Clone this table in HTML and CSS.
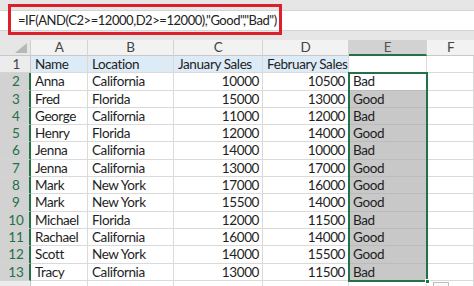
FILE: index.html
```html
<!DOCTYPE html>
<html>
<head>
<meta charset="utf-8">
<link rel="stylesheet" href="styles.css">
</head>
<body>
<div class="app">
  <div class="top-strip"></div>
  <div class="formula-row">
    <div class="fx-left"></div>
    <div class="formula">=IF(AND(C2&gt;=12000,D2&gt;=12000),"Good","Bad")</div>
  </div>
  <div class="gap-strip"></div>
  <div class="sheet">
    <div class="corner"><svg width="12" height="10" viewBox="0 0 12 10"><polygon points="12,0 12,10 0,10" fill="#b7b7b7"/></svg></div>
    <div class="ch">A</div><div class="ch">B</div><div class="ch">C</div><div class="ch">D</div><div class="ch ch-sel">E</div><div class="ch ch-last">F</div>

    <div class="rh">1</div><div class="c hd">Name</div><div class="c hd">Location</div><div class="c hd">January Sales</div><div class="c hd">February Sales</div><div class="c"></div><div class="c"></div>
    <div class="rh sel">2</div><div class="c">Anna</div><div class="c">California</div><div class="c n">10000</div><div class="c n">10500</div><div class="c e act">Bad</div><div class="c"></div>
    <div class="rh sel">3</div><div class="c">Fred</div><div class="c">Florida</div><div class="c n">15000</div><div class="c n">13000</div><div class="c e">Good</div><div class="c"></div>
    <div class="rh sel">4</div><div class="c">George</div><div class="c">California</div><div class="c n">11000</div><div class="c n">12000</div><div class="c e">Bad</div><div class="c"></div>
    <div class="rh sel">5</div><div class="c">Henry</div><div class="c">Florida</div><div class="c n">12000</div><div class="c n">14000</div><div class="c e">Good</div><div class="c"></div>
    <div class="rh sel">6</div><div class="c">Jenna</div><div class="c">California</div><div class="c n">14000</div><div class="c n">10000</div><div class="c e">Bad</div><div class="c"></div>
    <div class="rh sel">7</div><div class="c">Jenna</div><div class="c">California</div><div class="c n">13000</div><div class="c n">17000</div><div class="c e">Good</div><div class="c"></div>
    <div class="rh sel">8</div><div class="c">Mark</div><div class="c">New York</div><div class="c n">17000</div><div class="c n">16000</div><div class="c e">Good</div><div class="c"></div>
    <div class="rh sel">9</div><div class="c">Mark</div><div class="c">New York</div><div class="c n">15500</div><div class="c n">14000</div><div class="c e">Good</div><div class="c"></div>
    <div class="rh sel">10</div><div class="c">Michael</div><div class="c">Florida</div><div class="c n">12000</div><div class="c n">11500</div><div class="c e">Bad</div><div class="c"></div>
    <div class="rh sel">11</div><div class="c">Rachael</div><div class="c">California</div><div class="c n">16000</div><div class="c n">14000</div><div class="c e">Good</div><div class="c"></div>
    <div class="rh sel">12</div><div class="c">Scott</div><div class="c">New York</div><div class="c n">14000</div><div class="c n">15500</div><div class="c e">Good</div><div class="c"></div>
    <div class="rh sel">13</div><div class="c">Tracy</div><div class="c">California</div><div class="c n">13000</div><div class="c n">11500</div><div class="c e">Bad</div><div class="c"></div>
    <div class="rh last"></div><div class="c last"></div><div class="c last"></div><div class="c last"></div><div class="c last"></div><div class="c last"></div><div class="c last"><span class="qa"></span></div>

    <div class="selbox"><span class="handle"></span></div>
  </div>
  <div class="redbox"></div>
</div>
</body>
</html>
```

FILE: styles.css
```css
* { box-sizing: border-box; margin: 0; padding: 0; }
html, body { width: 474px; height: 286px; overflow: hidden; background: #fff; }
body { font-family: "Lato", "Open Sans", "Liberation Sans", sans-serif; color: #1f1f1f; }
.app { position: relative; width: 474px; height: 286px; overflow: hidden; }
.top-strip { height: 10px; background: #e6e6e6; }
.formula-row { height: 21px; display: flex; background: #fff; border-top: 1px solid #d4d4d4; border-bottom: 1px solid #d4d4d4; }
.fx-left { width: 9px; border-right: 1px solid #d4d4d4; }
.formula { padding-left: 9px; font-size: 13px; letter-spacing: -0.45px; word-spacing: 0; line-height: 19px; color: #222; white-space: nowrap; }
.gap-strip { height: 9px; background: #e6e6e6; }
.sheet {
  position: relative;
  display: grid;
  grid-template-columns: 31px 57px 86px 89px 86px 78px 47px;
  grid-template-rows: 16px repeat(13, 17.3px) 5px;
  font-size: 13.5px;
  letter-spacing: -0.4px;
}
.corner { background: #e6e6e6; border-right: 1px solid #d0d0d0; border-bottom: 1px solid #c8c8c8; display: flex; align-items: flex-end; justify-content: flex-end; padding: 0 3px 2px 0; }
.ch { background: #f2f2f2; border-right: 1px solid #d4d4d4; border-bottom: 1px solid #c8c8c8; text-align: center; line-height: 15px; color: #444; }
.ch-sel { background: #d2d2d2; border-bottom: 2px solid #217346; color: #555; }
.ch-last { border-right: none; }
.rh { background: #ececec; border-bottom: 1px solid #d4d4d4; border-right: 1px solid #c8c8c8; text-align: center; line-height: 16.3px; color: #444; padding-left: 3px; letter-spacing: 0; }
.rh.sel { background: #d2d2d2; color: #217346; border-right: 2px solid #217346; }
.c { border-right: 1px solid #dadada; border-bottom: 1px solid #dadada; padding: 0 3px 0 4px; line-height: 16.3px; white-space: nowrap; overflow: hidden; color: #1e1e1e; }
.last { border-bottom: none; }
.hd { background: #ddebf7; }
.n { text-align: right; }
.e { background: #c8c8c8; border-right-color: #bcbcbc; border-bottom-color: #bcbcbc; }
.e.act { background: #fff; }
.selbox {
  position: absolute;
  left: 348px; top: 32.3px;
  width: 80px; height: 209.6px;
  border: 2px solid #217346;
  pointer-events: none;
}
.handle { position: absolute; right: -4px; bottom: -4px; width: 5px; height: 5px; background: #217346; border: 1px solid #fff; }
.qa { display: block; margin: 1px 0 0 2px; width: 16px; height: 6px; border: 1px solid #bdbdbd; border-bottom: none; background: #fafafa; }
.redbox { position: absolute; left: 8px; top: 4px; width: 274px; height: 31px; border: 3px solid #dc1f2b; }
```
